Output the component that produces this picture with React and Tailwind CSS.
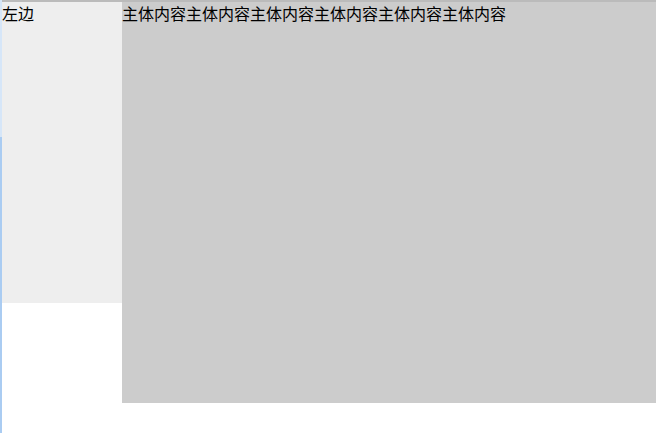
export default function App() {
  return (
    <div
      className="flex h-[433px] w-[656px] overflow-hidden bg-white text-[16px] leading-[22px] text-black"
      style={{ fontFamily: '"Noto Sans CJK SC", "Noto Sans", sans-serif' }}
    >
      <div className="flex w-[2px] flex-col">
        <div className="h-[137px] bg-[#d6e6f8]"></div>
        <div className="flex-1 bg-[#aaccf2]"></div>
      </div>
      <div className="flex flex-1 flex-col">
        <div className="h-[2px] bg-[#bbbbbb]"></div>
        <div className="flex items-start">
          <div className="h-[301px] w-[120px] bg-[#eeeeee]">左边</div>
          <div className="h-[401px] flex-1 bg-[#cccccc]">主体内容主体内容主体内容主体内容主体内容主体内容</div>
        </div>
      </div>
    </div>
  );
}
